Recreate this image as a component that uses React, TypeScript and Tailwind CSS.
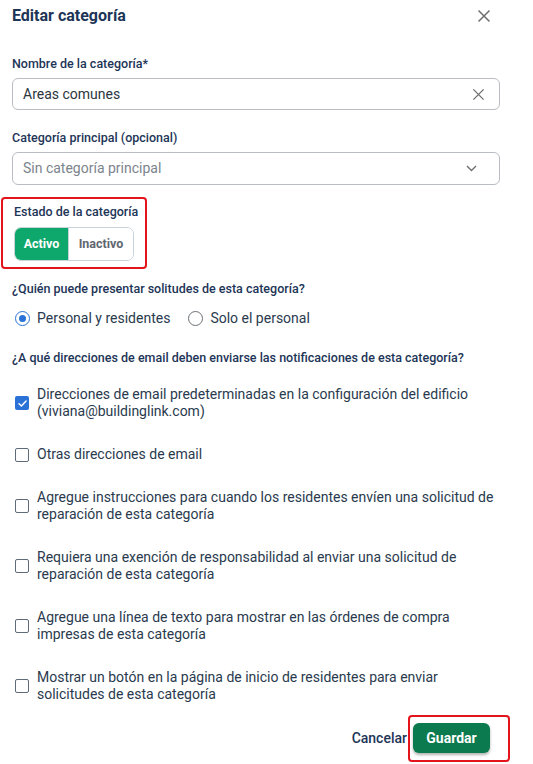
import { useState } from "react";

function Check({ checked }: { checked?: boolean }) {
  return checked ? (
    <span className="flex h-[14px] w-[14px] shrink-0 items-center justify-center rounded-[2px] bg-[#2b72d6]">
      <svg width="11" height="11" viewBox="0 0 12 12" fill="none">
        <path d="M2.2 6.3 4.8 8.8 9.9 3.4" stroke="white" strokeWidth="1.6" strokeLinecap="round" strokeLinejoin="round" />
      </svg>
    </span>
  ) : (
    <span className="h-[14px] w-[14px] shrink-0 rounded-[2px] border border-[#5f6b78] bg-white" />
  );
}

function Radio({ on }: { on?: boolean }) {
  return (
    <span
      className={
        "flex h-[15px] w-[15px] shrink-0 items-center justify-center rounded-full border-[1.5px] " +
        (on ? "border-[#2b72d6]" : "border-[#6b6f75]")
      }
    >
      {on && <span className="h-[7px] w-[7px] rounded-full bg-[#2b72d6]" />}
    </span>
  );
}

const options = [
  { checked: true, text: ["Direcciones de email predeterminadas en la configuración del edificio", "(viviana@buildinglink.com)"] },
  { text: ["Otras direcciones de email"] },
  { text: ["Agregue instrucciones para cuando los residentes envíen una solicitud de", "reparación de esta categoría"] },
  { text: ["Requiera una exención de responsabilidad al enviar una solicitud de", "reparación de esta categoría"] },
  { text: ["Agregue una línea de texto para mostrar en las órdenes de compra", "impresas de esta categoría"] },
  { text: ["Mostrar un botón en la página de inicio de residentes para enviar", "solicitudes de esta categoría"] },
];

export default function App() {
  const [name, setName] = useState("Areas comunes");
  const [active, setActive] = useState(true);

  return (
    <div className="min-h-screen w-[533px] bg-white px-3 font-['Roboto',sans-serif]">
      {/* header */}
      <div className="flex h-[26px] items-end justify-between pr-[30px]">
        <h1 className="text-[16px] font-bold leading-[20px] text-[#1d3557]">Editar categoría</h1>
        <svg width="14" height="14" viewBox="0 0 14 14" className="mb-[3px]">
          <path d="M1.5 1.5 12.5 12.5M12.5 1.5 1.5 12.5" stroke="#6e6e6e" strokeWidth="1.5" />
        </svg>
      </div>

      <div className="mt-[30px] text-[12.5px] font-medium leading-[16px] text-[#1d3557]">Nombre de la categoría*</div>
      <div className="mt-[6px] flex h-[32px] w-[488px] items-center rounded-[6px] border border-[#b9bcc1] pl-[10px] pr-[14px]">
        <input
          value={name}
          onChange={(e) => setName(e.target.value)}
          className="flex-1 bg-transparent text-[14px] text-[#2d3540] outline-none"
        />
        <svg width="13" height="13" viewBox="0 0 14 14">
          <path d="M1.5 1.5 12.5 12.5M12.5 1.5 1.5 12.5" stroke="#6e6e6e" strokeWidth="1.4" />
        </svg>
      </div>

      <div className="mt-[20px] text-[12.5px] font-medium leading-[16px] text-[#1d3557]">Categoría principal (opcional)</div>
      <div className="mt-[6px] flex h-[33px] w-[488px] items-center justify-between rounded-[6px] border border-[#b9bcc1] pl-[10px] pr-[22px]">
        <span className="text-[14px] text-[#7c848d]">Sin categoría principal</span>
        <svg width="11" height="7" viewBox="0 0 11 7">
          <path d="M1 1 5.5 5.5 10 1" stroke="#6e6e6e" strokeWidth="1.4" fill="none" />
        </svg>
      </div>

      {/* estado */}
      <div className="ml-[-11px] mt-[12px] w-[146px] rounded-[4px] border-2 border-[#e3141b] pb-[6px] pl-[11px] pt-[5px]">
        <div className="text-[12.5px] font-medium leading-[16px] text-[#1d3557]">Estado de la categoría</div>
        <div className="mt-[7px] flex h-[34px] w-[120px] overflow-hidden rounded-[7px] border border-[#c8d2dc] text-[12.5px] font-bold">
          <button
            onClick={() => setActive(true)}
            className={"w-[53px] " + (active ? "bg-[#0ea86c] text-white" : "bg-white text-[#5f6670]")}
          >
            Activo
          </button>
          <button
            onClick={() => setActive(false)}
            className={"flex-1 border-l border-[#c8d2dc] " + (!active ? "bg-[#0ea86c] text-white" : "bg-white text-[#5f6670]")}
          >
            Inactivo
          </button>
        </div>
      </div>

      <div className="mt-[12px] text-[12.5px] font-medium leading-[16px] text-[#1d3557]">
        ¿Quién puede presentar solitudes de esta categoría?
      </div>
      <div className="mt-[13px] flex items-center pl-[3px] text-[14px] leading-[17px] text-[#2a3a4e]">
        <Radio on />
        <span className="ml-[7px]">Personal y residentes</span>
        <span className="ml-[18px]">
          <Radio />
        </span>
        <span className="ml-[7px]">Solo el personal</span>
      </div>

      <div className="mt-[23px] text-[12.5px] font-medium leading-[16px] text-[#1d3557]">
        ¿A qué direcciones de email deben enviarse las notificaciones de esta categoría?
      </div>

      <div className="mt-[20px] flex flex-col gap-[26px]">
        {options.map((o, i) => (
          <div key={i} className="flex items-center pl-[3px]">
            <Check checked={o.checked} />
            <div className="ml-[8px] text-[14px] leading-[17px] text-[#2a3a4e]">
              {o.text.map((t, j) => (
                <div key={j}>{t}</div>
              ))}
            </div>
          </div>
        ))}
      </div>

      {/* footer */}
      <div className="mt-[12px] flex items-center justify-end pr-[11px]">
        <button className="mr-[1px] text-[14px] font-medium text-[#1d3557]">Cancelar</button>
        <div className="rounded-[4px] border-2 border-[#e3141b] pb-[7px] pl-[3px] pr-[18px] pt-[6px]">
          <button className="h-[30px] w-[77px] rounded-[6px] bg-[#0b7a4e] text-[14px] font-bold text-white shadow-[0_2px_3px_rgba(0,0,0,0.3)]">
            Guardar
          </button>
        </div>
      </div>
    </div>
  );
}
